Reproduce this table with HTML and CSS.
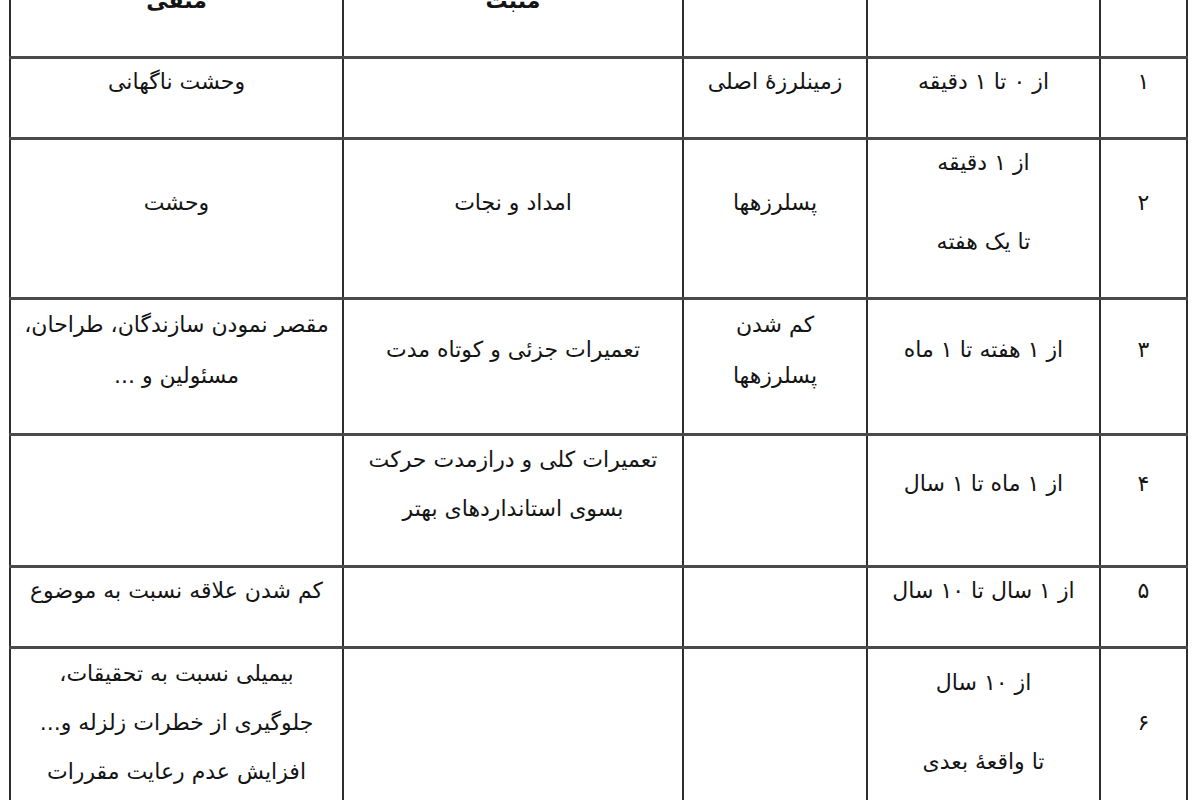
FILE: index.html
```html
<!DOCTYPE html>
<html lang="fa" dir="rtl">
<head>
<meta charset="utf-8">
<title>جدول مراحل پس از زلزله</title>
<link rel="stylesheet" href="styles.css">
</head>
<body>
<table class="grid">
  <colgroup>
    <col class="c-num">
    <col class="c-time">
    <col class="c-event">
    <col class="c-pos">
    <col class="c-neg">
  </colgroup>
  <tbody>
    <tr class="head">
      <td></td>
      <td></td>
      <td></td>
      <td>مثبت</td>
      <td>منفی</td>
    </tr>
    <tr>
      <td>۱</td>
      <td>از ۰ تا ۱ دقیقه</td>
      <td>زمینلرزهٔ اصلی</td>
      <td></td>
      <td>وحشت ناگهانی</td>
    </tr>
    <tr>
      <td>۲</td>
      <td><p>از ۱ دقیقه</p><p class="next">تا یک هفته</p></td>
      <td>پسلرزهها</td>
      <td>امداد و نجات</td>
      <td>وحشت</td>
    </tr>
    <tr class="r3">
      <td>۳</td>
      <td>از ۱ هفته تا ۱ ماه</td>
      <td>کم شدن<br>پسلرزهها</td>
      <td>تعمیرات جزئی و کوتاه مدت</td>
      <td>مقصر نمودن سازندگان، طراحان،<br>مسئولین و ...</td>
    </tr>
    <tr class="r4">
      <td>۴</td>
      <td>از ۱ ماه تا ۱ سال</td>
      <td></td>
      <td>تعمیرات کلی و درازمدت حرکت<br>بسوی استانداردهای بهتر</td>
      <td></td>
    </tr>
    <tr>
      <td>۵</td>
      <td>از ۱ سال تا ۱۰ سال</td>
      <td></td>
      <td></td>
      <td>کم شدن علاقه نسبت به موضوع</td>
    </tr>
    <tr>
      <td>۶</td>
      <td><p>از ۱۰ سال</p><p class="next">تا واقعهٔ بعدی</p></td>
      <td></td>
      <td></td>
      <td class="tight">بیمیلی نسبت به تحقیقات،<br>جلوگیری از خطرات زلزله و...<br>افزایش عدم رعایت مقررات</td>
    </tr>
  </tbody>
</table>
</body>
</html>
```

FILE: styles.css
```css
html, body {
  margin: 0;
  padding: 0;
  background: #ffffff;
  overflow: hidden;
}

body {
  font-family: "DejaVu Sans", sans-serif;
  color: #141414;
}

.grid {
  margin: -25px 12px 0 0;
  width: 1177px;
  table-layout: fixed;
  border-collapse: collapse;
  font-size: 22px;
}

.c-num { width: 87px; }
.c-time { width: 233px; }
.c-event { width: 184px; }
.c-pos { width: 340px; }
.c-neg { width: 333px; }

.grid td {
  border-left: 2px solid #2e2e2e;
  border-right: 2px solid #2e2e2e;
  border-top: 3px solid #4a4a4a;
  border-bottom: 3px solid #4a4a4a;
  padding: 0 6px 32px;
  line-height: 46px;
  text-align: center;
  vertical-align: middle;
}

.grid .head td {
  font-weight: bold;
}

.grid .r3 td {
  line-height: 50.5px;
}

.grid .r4 td {
  line-height: 48.5px;
}

.grid p {
  margin: 0;
}

.grid p.next {
  margin-top: 33px;
}

.grid td.tight {
  line-height: 49px;
}
```
